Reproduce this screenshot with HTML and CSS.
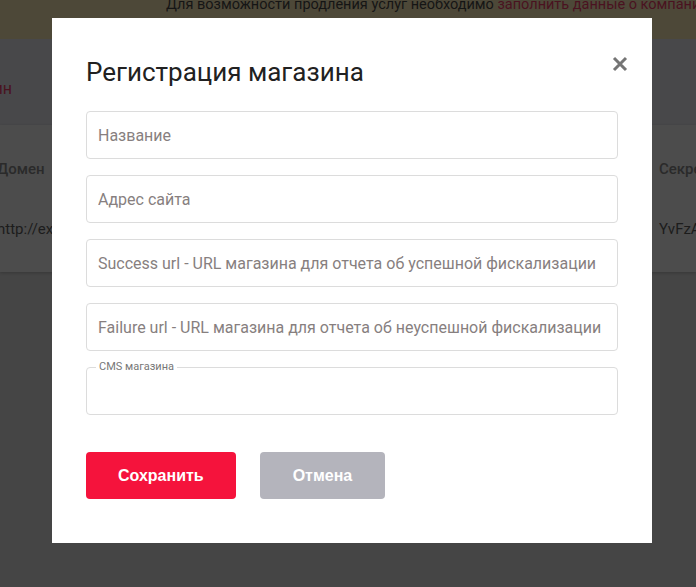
FILE: index.html
```html
<!DOCTYPE html>
<html>
<head>
  <meta charset="UTF-8">
  <title>Магазины</title>
  <link rel="stylesheet" href="styles.css">
</head>
<body>
  <div class="notice">
    <div class="notice-text">Для возможности продления услуг необходимо <a href="#" class="notice-link">заполнить данные о компании</a></div>
  </div>

  <div class="tabs">
    <span class="tab-link">Добавить магазин</span>
  </div>

  <div class="shops-card">
    <div class="shops-row shops-head">
      <span class="cell-domain">Домен</span>
      <span class="cell-secret">Секретный ключ</span>
    </div>
    <div class="shops-row">
      <span class="cell-domain">http://example.com</span>
      <span class="cell-secret">YvFzAbc</span>
    </div>
  </div>

  <!-- Modal -->
  <div class="modal">
    <div class="modal-header">
      <div class="modal-title">Регистрация магазина</div>
      <span class="modal-close">
        <svg width="16" height="16" viewBox="0 0 16 16">
          <path d="M2 2 L14 14 M14 2 L2 14" stroke="#757575" stroke-width="3"/>
        </svg>
      </span>
    </div>
    <div class="form">
      <input class="form-input" type="text" placeholder="Название">
      <input class="form-input" type="text" placeholder="Адрес сайта">
      <input class="form-input" type="text" placeholder="Success url - URL магазина для отчета об успешной фискализации">
      <input class="form-input" type="text" placeholder="Failure url - URL магазина для отчета об неуспешной фискализации">
      <fieldset class="form-select">
        <legend>CMS магазина</legend>
      </fieldset>
    </div>
    <div class="modal-actions">
      <button class="save-button">Сохранить</button>
      <button class="cancel-button">Отмена</button>
    </div>
  </div>
</body>
</html>
```

FILE: styles.css
```css
body {
  margin: 0;
  font-family: Roboto, "Liberation Sans", sans-serif;
  background-color: #454545;
  overflow: hidden;
  height: 587px;
}

.notice {
  height: 39px;
  background-color: #4d4838;
  overflow: hidden;
  white-space: nowrap;
}

.notice-text {
  margin-top: -5px;
  padding-left: 166px;
  font-size: 14.5px;
  line-height: 20px;
  color: #151515;
}

.notice-link {
  color: #4a1220;
  text-decoration: none;
}

.tabs {
  height: 86px;
  background-color: #48484a;
  display: flex;
  align-items: center;
  overflow: hidden;
  white-space: nowrap;
}

.tab-link {
  margin-left: -128px;
  margin-top: 12px;
  font-size: 16px;
  color: #4a1220;
}

.shops-card {
  height: 147px;
  background-color: #4c4c4c;
  box-shadow: 0 1px 3px rgba(0,0,0,0.2);
  overflow: hidden;
}

.shops-row {
  display: flex;
  justify-content: space-between;
  height: 60px;
  align-items: center;
  font-size: 15px;
  color: #1c1c1c;
  white-space: nowrap;
}

.shops-head {
  margin-top: 14px;
  color: #2a2a2a;
  font-weight: 500;
}

.cell-domain {
  margin-left: -3px;
}

.cell-secret {
  width: 37px;
}

.modal {
  position: absolute;
  top: 18px;
  left: 52px;
  width: 600px;
  height: 525px;
  box-sizing: border-box;
  padding: 39px 34px 0 34px;
  background-color: #fff;
}

.modal-header {
  display: flex;
  justify-content: space-between;
  align-items: flex-start;
}

.modal-title {
  font-size: 26px;
  line-height: 30px;
  color: #212121;
}

.modal-close {
  margin-top: -1px;
  margin-right: -10px;
  width: 16px;
  height: 16px;
  cursor: pointer;
}

.form {
  margin-top: 24px;
  display: flex;
  flex-direction: column;
  gap: 16px;
}

.form-input {
  height: 48px;
  box-sizing: border-box;
  padding: 0 11px;
  border: 1px solid #dcdcdc;
  border-radius: 4px;
  font-family: inherit;
  font-size: 16px;
  color: #333;
  outline: none;
}

.form-input::placeholder {
  color: #877f7f;
}

.form-select {
  height: 54px;
  margin: -6px 0 0 0;
  box-sizing: border-box;
  padding: 0 11px;
  border: 1px solid #dcdcdc;
  border-radius: 4px;
}

.form-select legend {
  padding: 0 3px;
  margin-left: -2px;
  font-size: 11px;
  line-height: 12px;
  color: #777;
}

.modal-actions {
  margin-top: 37px;
  display: flex;
  gap: 24px;
}

.save-button,
.cancel-button {
  height: 47px;
  padding: 0 32px;
  border: none;
  border-radius: 4px;
  font-family: "Liberation Sans", Arial, sans-serif;
  font-size: 16px;
  font-weight: bold;
  color: #fff;
  cursor: pointer;
}

.save-button {
  background-color: #f5133c;
}

.cancel-button {
  padding: 0 33px;
  background-color: #b4b4bc;
}
```
